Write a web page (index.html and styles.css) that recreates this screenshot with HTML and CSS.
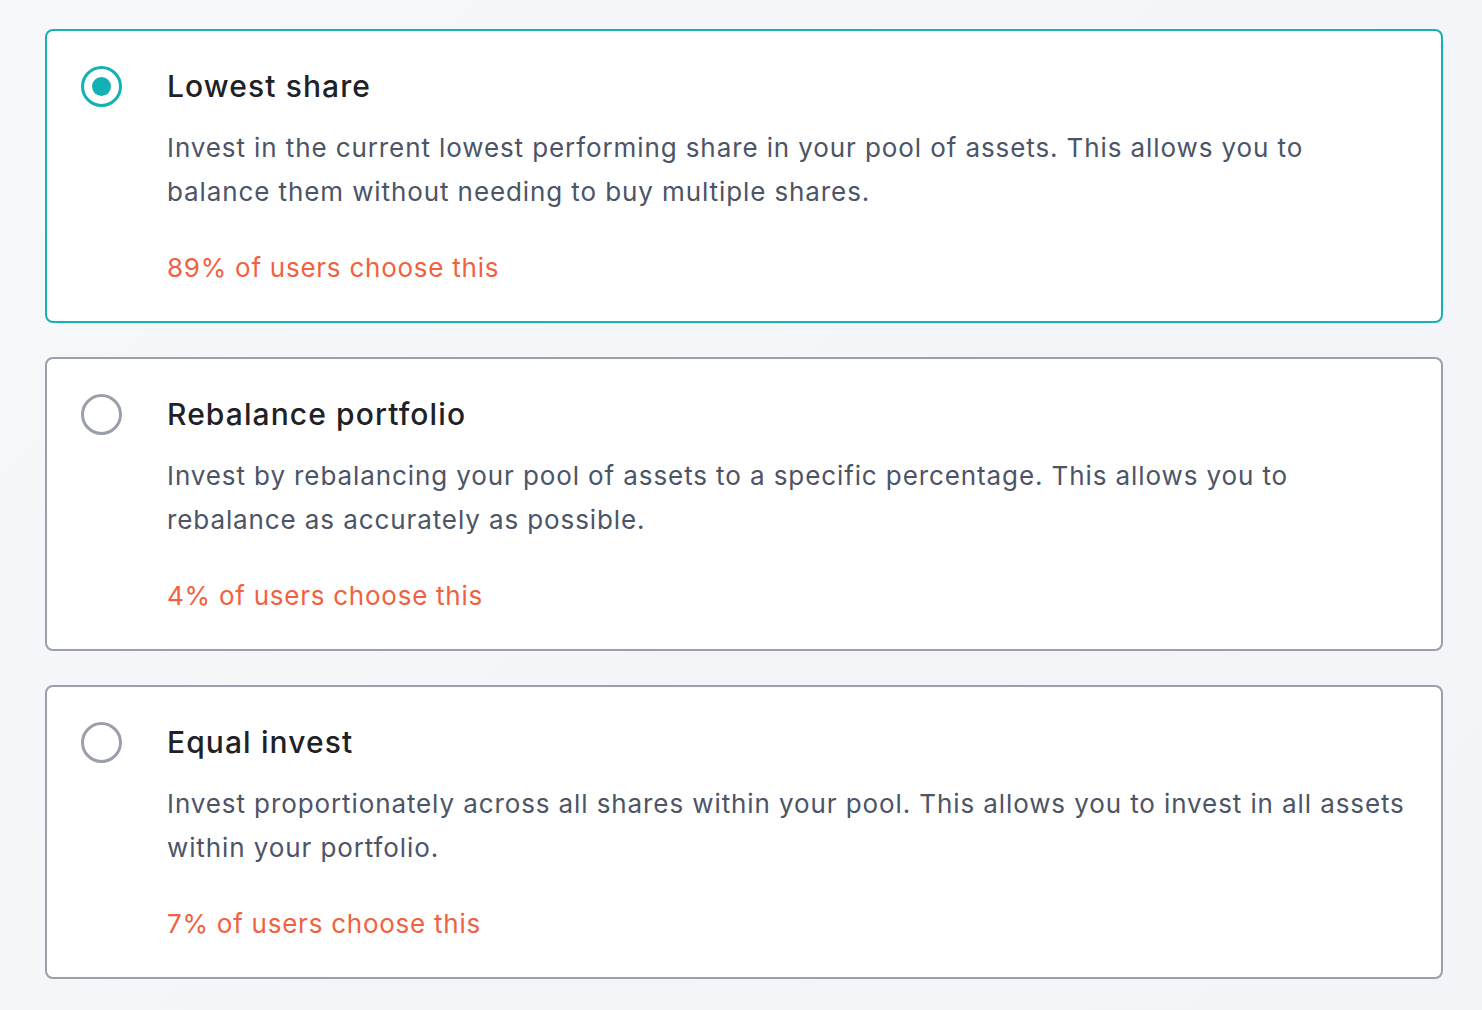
FILE: index.html
```html
<!DOCTYPE html>
<html lang="en">
<head>
<meta charset="utf-8">
<title>Investment strategy</title>
<link rel="stylesheet" href="styles.css">
</head>
<body>
<main class="options">
  <label class="option option--selected">
    <span class="radio radio--on"><span class="radio-dot"></span></span>
    <span class="option-body">
      <span class="option-title">Lowest share</span>
      <span class="option-desc">Invest in the current lowest performing share in your pool of assets. This allows you to balance them without needing to buy multiple shares.</span>
      <span class="option-stat">89% of users choose this</span>
    </span>
  </label>
  <label class="option">
    <span class="radio"></span>
    <span class="option-body">
      <span class="option-title">Rebalance portfolio</span>
      <span class="option-desc">Invest by rebalancing your pool of assets to a specific percentage. This allows you to rebalance as accurately as possible.</span>
      <span class="option-stat">4% of users choose this</span>
    </span>
  </label>
  <label class="option">
    <span class="radio"></span>
    <span class="option-body">
      <span class="option-title">Equal invest</span>
      <span class="option-desc">Invest proportionately across all shares within your pool. This allows you to invest in all assets within your portfolio.</span>
      <span class="option-stat">7% of users choose this</span>
    </span>
  </label>
</main>
</body>
</html>
```
FILE: styles.css
```css
* { box-sizing: border-box; }
html, body { margin: 0; padding: 0; }
body {
  width: 1482px;
  height: 1010px;
  overflow: hidden;
  background: linear-gradient(135deg, #f7f8fa 0%, #f4f5f8 60%, #f2f4f7 100%);
  font-family: "Inter", "Liberation Sans", sans-serif;
  -webkit-font-smoothing: antialiased;
}
.options {
  display: flex;
  flex-direction: column;
  gap: 34px;
  padding: 29px 39px 0 45px;
}
.option {
  display: flex;
  align-items: flex-start;
  gap: 45px;
  background: #ffffff;
  border: 2px solid #9a9fab;
  border-radius: 8px;
  padding: 35px 28px 31px 34px;
  height: 294px;
  cursor: pointer;
}
.option--selected {
  border-color: #17b2b4;
}
.radio {
  flex: none;
  width: 41px;
  height: 41px;
  border: 3px solid #9a9fab;
  border-radius: 50%;
  display: flex;
  align-items: center;
  justify-content: center;
}
.radio--on {
  border-color: #13b1b3;
}
.radio-dot {
  width: 19px;
  height: 19px;
  border-radius: 50%;
  background: #13b1b3;
}
.option-body {
  display: flex;
  flex-direction: column;
}
.option-title {
  font-size: 30px;
  line-height: 40px;
  font-weight: 500;
  color: #1e2126;
  letter-spacing: 1.1px;
}
.option-desc {
  margin-top: 20px;
  font-size: 26px;
  line-height: 44px;
  color: #4c5467;
  letter-spacing: 0.9px;
}
.option-stat {
  margin-top: 32px;
  font-size: 26px;
  line-height: 44px;
  color: #f2613f;
  letter-spacing: 0.75px;
}
```
